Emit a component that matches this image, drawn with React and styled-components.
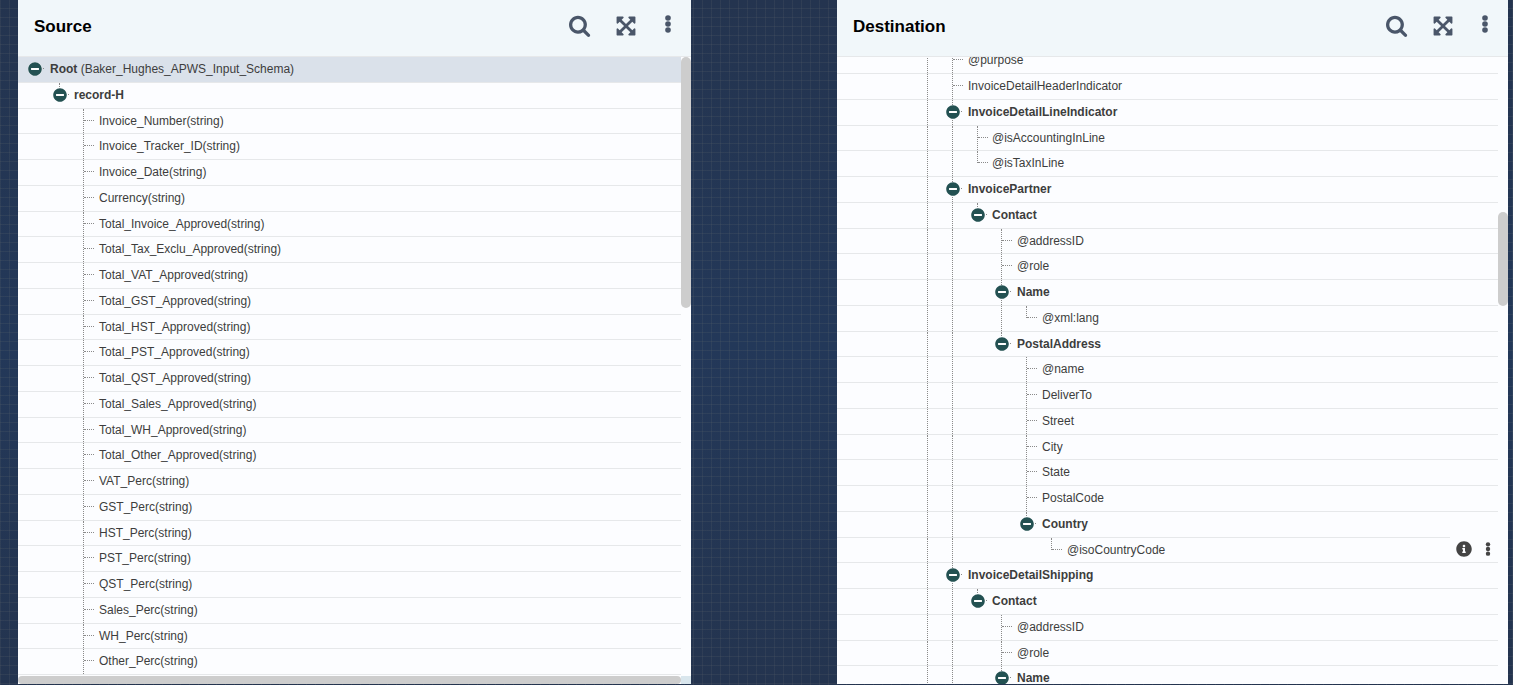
import React, { useLayoutEffect, useRef } from 'react';
import styled, { createGlobalStyle } from 'styled-components';
import { FaInfoCircle, FaMinusCircle } from 'react-icons/fa';

const fields = [
    'Invoice_Number', 'Invoice_Tracker_ID', 'Invoice_Date', 'Currency',
    'Total_Invoice_Approved', 'Total_Tax_Exclu_Approved', 'Total_VAT_Approved',
    'Total_GST_Approved', 'Total_HST_Approved', 'Total_PST_Approved',
    'Total_QST_Approved', 'Total_Sales_Approved', 'Total_WH_Approved',
    'Total_Other_Approved', 'VAT_Perc', 'GST_Perc', 'HST_Perc', 'PST_Perc',
    'QST_Perc', 'Sales_Perc', 'WH_Perc', 'Other_Perc'
];

// guides holds one letter per column: "." empty, "|" line, "+" branch, "L" last branch,
// "'" line down to the toggle, ":" line running behind the toggle
const sourceNodes = [
    { name: 'Root', note: '(Baker_Hughes_APWS_Input_Schema)', guides: '.', open: true, selected: true },
    { name: 'record-H', guides: ".'", open: true },
    ...fields.map((field) => ({ name: `${field}(string)`, guides: '..+' }))
];

const destinationNodes = [
    { name: '@purpose', guides: '...|+' },
    { name: 'InvoiceDetailHeaderIndicator', guides: '...|+' },
    { name: 'InvoiceDetailLineIndicator', guides: '...|:', open: true },
    { name: '@isAccountingInLine', guides: '...||+' },
    { name: '@isTaxInLine', guides: '...||L' },
    { name: 'InvoicePartner', guides: '...|:', open: true },
    { name: 'Contact', guides: "...||'", open: true },
    { name: '@addressID', guides: '...||.+' },
    { name: '@role', guides: '...||.+' },
    { name: 'Name', guides: '...||.:', open: true },
    { name: '@xml:lang', guides: '...||.|L' },
    { name: 'PostalAddress', guides: "...||.'", open: true },
    { name: '@name', guides: '...||..+' },
    { name: 'DeliverTo', guides: '...||..+' },
    { name: 'Street', guides: '...||..+' },
    { name: 'City', guides: '...||..+' },
    { name: 'State', guides: '...||..+' },
    { name: 'PostalCode', guides: '...||..+' },
    { name: 'Country', guides: "...||..'", open: true },
    { name: '@isoCountryCode', guides: '...||...L', actions: true },
    { name: 'InvoiceDetailShipping', guides: '...|:', open: true },
    { name: 'Contact', guides: "...||'", open: true },
    { name: '@addressID', guides: '...||.+' },
    { name: '@role', guides: '...||.+' },
    { name: 'Name', guides: '...||.:', open: true }
];

const SearchIcon = () => (
    <svg width="22" height="22" viewBox="64 64 1728 1728" fill="currentColor">
        <path d="M1216 832q0-185-131.5-316.5t-316.5-131.5-316.5 131.5-131.5 316.5 131.5 316.5 316.5 131.5 316.5-131.5 131.5-316.5zm512 832q0 52-38 90t-90 38q-54 0-90-38l-343-342q-179 124-399 124-143 0-273.5-55.5t-225-150-150-225-55.5-273.5 55.5-273.5 150-225 225-150 273.5-55.5 273.5 55.5 225 150 150 225 55.5 273.5q0 220-124 399l343 343q37 37 37 90z" />
    </svg>
);

const ExpandIcon = () => (
    <svg width="22" height="22" viewBox="0 0 1792 1792" fill="currentColor">
        <path d="M1411 541l-355 355 355 355 144-144q29-31 70-14 39 17 39 59v448q0 26-19 45t-45 19h-448q-42 0-59-40-17-39 14-69l144-144-355-355-355 355 144 144q31 30 14 69-17 40-59 40h-448q-26 0-45-19t-19-45v-448q0-42 40-59 39-17 69 14l144 144 355-355-355-355-144 144q-19 19-45 19-12 0-24-5-40-17-40-59v-448q0-26 19-45t45-19h448q42 0 59 40 17 39-14 69l-144 144 355 355 355-355-144-144q-31-30-14-69 17-40 59-40h448q26 0 45 19t19 45v448q0 42-39 59-13 5-25 5-26 0-45-19z" />
    </svg>
);

const DotsIcon = ({ height }) => (
    <svg width="14" height={height} viewBox="0 0 6 18" fill="currentColor">
        <circle cx="3" cy="3" r="2.8" />
        <circle cx="3" cy="9" r="2.8" />
        <circle cx="3" cy="15" r="2.8" />
    </svg>
);

const TreeRow = ({ node }) => (
    <Row $selected={node.selected}>
        {node.guides.split('').map((kind, i) => {
            const toggle = node.open && i === node.guides.length - 1;
            return (
                <Guide key={i} $kind={kind} $stub={toggle}>
                    {toggle && (
                        <Toggle type="button" aria-label={`Collapse ${node.name}`}>
                            <FaMinusCircle size={14} />
                        </Toggle>
                    )}
                </Guide>
            );
        })}
        <Label $strong={node.open}>
            {node.name}{node.note && <span> {node.note}</span>}
        </Label>
        {node.actions && (
            <RowActions>
                <IconButton type="button" aria-label="Info"><FaInfoCircle size={16} /></IconButton>
                <IconButton type="button" aria-label="More"><DotsIcon height={14} /></IconButton>
            </RowActions>
        )}
    </Row>
);

const Panel = ({ title, nodes, shortRow, scrollTop = 0, thumb, horizontal }) => {
    const treeRef = useRef(null);

    useLayoutEffect(() => {
        treeRef.current.scrollTop = scrollTop;
    }, [scrollTop]);

    return (
        <PanelBox>
            <PanelHeader>
                <h2>{title}</h2>
                <HeaderActions>
                    <IconButton type="button" aria-label={`Search ${title}`}><SearchIcon /></IconButton>
                    <IconButton type="button" aria-label={`Expand ${title}`}><ExpandIcon /></IconButton>
                    <IconButton type="button" aria-label={`${title} menu`}><DotsIcon height={18} /></IconButton>
                </HeaderActions>
            </PanelHeader>
            <PanelBody>
                <Tree ref={treeRef} $shortRow={shortRow}>
                    {nodes.map((node, i) => <TreeRow key={i} node={node} />)}
                </Tree>
                <Track><Thumb style={{ marginTop: thumb.top, height: thumb.size }} /></Track>
            </PanelBody>
            {horizontal && (
                <BottomTrack>
                    <BottomThumb />
                    <Corner />
                </BottomTrack>
            )}
        </PanelBox>
    );
};

const App = () => (
    <>
        <GlobalStyle />
        <Board>
            <Panel title="Source" nodes={sourceNodes} shortRow="4n + 3" thumb={{ top: 0, size: 251 }} horizontal />
            <Panel title="Destination" nodes={destinationNodes} shortRow="4n" scrollTop={9} thumb={{ top: 155, size: 94 }} />
        </Board>
    </>
);

const GlobalStyle = createGlobalStyle`
    * {
        box-sizing: border-box;
    }
    body {
        margin: 0;
        font-family: "Liberation Sans", Arial, sans-serif;
        color: #3d3d3d;
    }
`;

const Board = styled.main`
    display: grid;
    grid-template-columns: 673fr 671fr;
    grid-template-rows: minmax(0, 1fr);
    column-gap: 146px;
    height: 100vh;
    padding: 0 5px 1px 18px;
    background-image:
        linear-gradient(to right, rgba(130, 130, 120, .13) 1px, transparent 1px),
        linear-gradient(to bottom, rgba(130, 130, 120, .13) 1px, transparent 1px),
        linear-gradient(to bottom, #24344f, #233859 50%, #24344f);
    background-size: 9px 9px, 9px 9px, 100% 100%;
    background-position: 0 0, 0 8px, 0 0;
`;

const PanelBox = styled.section`
    display: flex;
    flex-direction: column;
    min-width: 0;
    background: #fcfdff;
`;

const PanelHeader = styled.header`
    display: flex;
    align-items: center;
    justify-content: space-between;
    height: 57px;
    flex: none;
    padding: 0 16px 3px;
    background: #f1f7fa;
    border-bottom: 1px solid #e6e8ea;
    h2 {
        margin: 0;
        font-size: 17px;
        line-height: 20px;
        color: #000;
    }
`;

const HeaderActions = styled.div`
    display: flex;
    align-items: flex-start;
    gap: 24px;
    padding-bottom: 2px;
    color: #4a5669;
`;

const IconButton = styled.button`
    display: flex;
    padding: 0;
    border: 0;
    background: none;
    color: inherit;
    cursor: pointer;
`;

const PanelBody = styled.div`
    display: flex;
    flex: 1;
    min-height: 0;
`;

const Tree = styled.ul`
    flex: 1;
    min-width: 0;
    margin: 0;
    padding: 0;
    list-style: none;
    overflow: hidden;
    li:nth-child(${({ $shortRow }) => $shortRow}) {
        height: 25px;
    }
`;

const Row = styled.li`
    display: flex;
    height: 26px;
    padding-left: 5px;
    border-bottom: 1px solid #e6e8ea;
    background: ${({ $selected }) => ($selected ? '#dae1ea' : 'none')};
`;

const guideHeight = { '|': '100%', '+': '100%', ':': '100%', L: '12px', "'": '12px' };

const Guide = styled.span`
    position: relative;
    flex: none;
    width: 25px;
    &:nth-child(4n + 2) {
        width: 24px;
    }
    &::before {
        content: '';
        position: absolute;
        top: 0;
        left: 11px;
        height: ${({ $kind }) => guideHeight[$kind] || 0};
        border-left: 1px dotted #8a8a8a;
    }
    &::after {
        content: '';
        position: absolute;
        top: 11px;
        left: 12px;
        width: ${({ $stub }) => ($stub ? '9px' : '10px')};
        border-top: ${({ $kind, $stub }) => ($stub || $kind === '+' || $kind === 'L' ? '1px dotted #8a8a8a' : '0')};
    }
`;

const Toggle = styled.button`
    position: relative;
    z-index: 1;
    display: flex;
    margin: 5px;
    padding: 0;
    border: 0;
    border-radius: 50%;
    background: #fff;
    color: #235152;
    cursor: pointer;
`;

const Label = styled.span`
    padding-left: 2px;
    font-size: 12px;
    line-height: 24px;
    white-space: nowrap;
    font-weight: ${({ $strong }) => ($strong ? 'bold' : 'normal')};
    span {
        font-weight: normal;
    }
`;

const RowActions = styled.div`
    display: flex;
    align-items: center;
    gap: 9px;
    margin: -1px 0 0 auto;
    padding: 0 3px 2px 6px;
    background: #fcfdff;
    color: #444;
`;

const Track = styled.div`
    flex: none;
    width: 10px;
`;

const Thumb = styled.div`
    border-radius: 5px;
    background: #cdcdcd;
`;

const BottomTrack = styled.div`
    display: flex;
    flex: none;
    height: 8px;
`;

const BottomThumb = styled.div`
    flex: 1;
    border-radius: 5px;
    background: #cdcdcd;
`;

const Corner = styled.div`
    width: 10px;
    background: #d9e6ed;
`;

export default App;
